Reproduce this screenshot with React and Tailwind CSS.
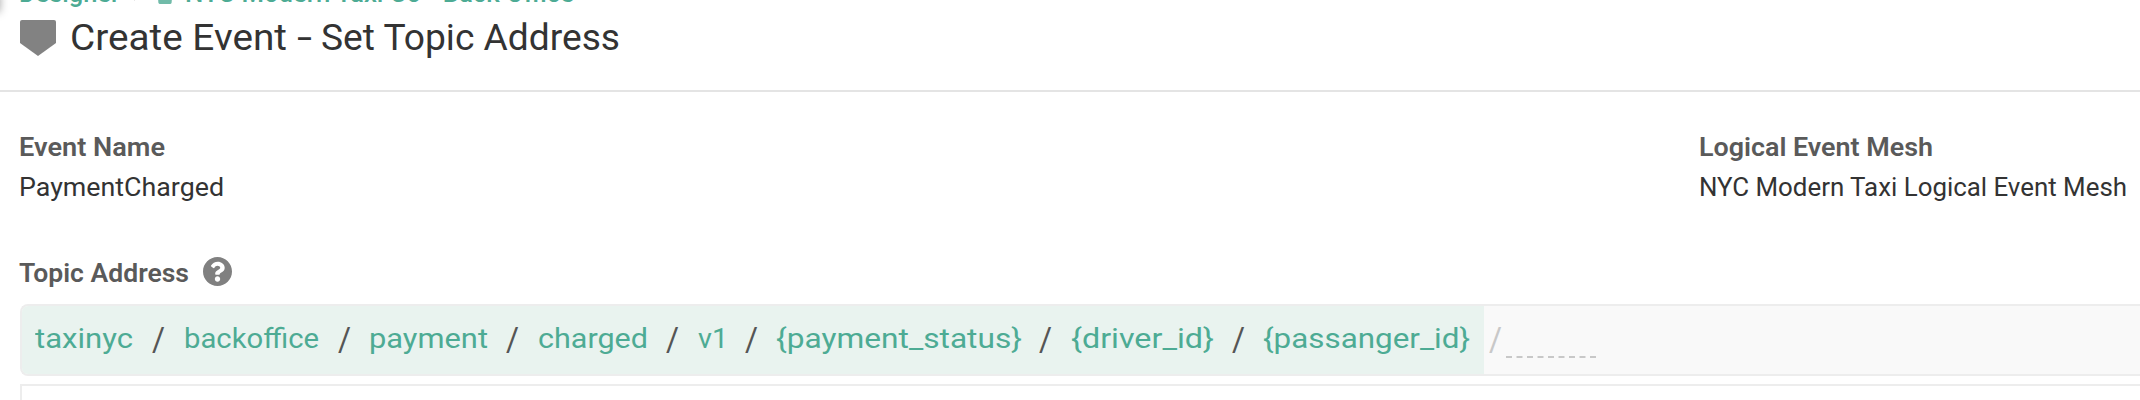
import { useLayoutEffect, useRef } from "react";
import { clsx } from "clsx";

// Stretches a single line of text so that it fills its box exactly.
function Fit({ className, children }) {
  const box = useRef(null);
  const text = useRef(null);
  useLayoutEffect(() => {
    const fit = () => {
      text.current.style.transform = "none";
      const natural = text.current.getBoundingClientRect().width;
      const wanted = box.current.getBoundingClientRect().width;
      text.current.style.transform = `scaleX(${wanted / natural})`;
    };
    fit();
    document.fonts.ready.then(fit);
  }, []);
  return (
    <span ref={box} className={clsx("block shrink-0 whitespace-nowrap", className)}>
      <span ref={text} className="inline-block origin-left">
        {children}
      </span>
    </span>
  );
}

const levels = [
  { name: "taxinyc", width: "w-[98px]", gap: "ml-[19px] mr-[19px]" },
  { name: "backoffice", width: "w-[135px]", gap: "ml-[19px] mr-[18px]" },
  { name: "payment", width: "w-[119px]", gap: "ml-[18px] mr-[19px]" },
  { name: "charged", width: "w-[110px]", gap: "ml-[18px] mr-[19px]" },
  { name: "v1", width: "w-[30px]", gap: "ml-[17px] mr-[18px]" },
  { name: "{payment_status}", width: "w-[246px]", gap: "ml-[17px] mr-[19px]" },
  { name: "{driver_id}", width: "w-[143px]", gap: "ml-[18px] mr-[18px]" },
  { name: "{passanger_id}", width: "w-[207px]", gap: "" },
];

function Slash({ className }) {
  return <Fit className={clsx("w-[13px] pt-px text-[33px]", className)}>/</Fit>;
}

function Field({ label, value, labelWidth, valueWidth }) {
  return (
    <div className="text-[26px] leading-10">
      <Fit className={clsx("font-semibold text-[#5a5a5a]", labelWidth)}>{label}</Fit>
      <Fit className={clsx("text-[#333333]", valueWidth)}>{value}</Fit>
    </div>
  );
}

export default function App() {
  return (
    <div className="flex h-[400px] w-[2140px] flex-col overflow-hidden bg-white font-['Roboto',sans-serif]">
      <header className="relative h-[92px] shrink-0 border-b-2 border-[#e4e4e4]">
        <div className="absolute -left-3 -top-2 h-5 w-3 shadow-[0_0_8px_rgba(0,0,0,0.35)]" />
        <nav className="flex h-3 items-end overflow-hidden pl-[19px] text-[25px] font-medium leading-[30px] text-[#4dab94]">
          <Fit className="mb-[3px] w-[101px]">Designer</Fit>
          <svg className="mb-2.5 ml-[13px] h-4 w-2 shrink-0" viewBox="0 0 8 16" fill="none" stroke="#a0a0a0" strokeWidth="1.5">
            <path d="M1 2l5 6-5 6" />
          </svg>
          <svg className="mb-2 ml-4 h-4 w-4 shrink-0" viewBox="0 0 16 16" fill="#71bba9">
            <path d="M0 0H16L14.6 14.5Q14.4 16 13 16H3Q1.6 16 1.4 14.5Z" />
          </svg>
          <Fit className="mb-[3px] ml-3 w-[389px]">NYC Modern Taxi Co - Back Office</Fit>
        </nav>
        <div className="flex items-start pl-5 pt-1">
          <svg className="mt-1 h-9 w-9 shrink-0" viewBox="0 0 36 36" fill="#828282">
            <path d="M2 0H34Q36 0 36 2V23L18 36L0 23V2Q0 0 2 0Z" />
          </svg>
          <h1 className="ml-[14px] flex text-[36px] leading-[44px] font-[450] text-[#333333]">
            <Fit className="w-[217px]">Create Event</Fit>
            <Fit className="ml-[10px] w-[15px]">-</Fit>
            <Fit className="ml-[9px] w-[299px]">Set Topic Address</Fit>
          </h1>
        </div>
      </header>

      <main className="flex flex-1 flex-col pt-[35px]">
        <div className="flex">
          <div className="w-[1680px] shrink-0 pl-[19px]">
            <Field label="Event Name" value="PaymentCharged" labelWidth="w-[146px]" valueWidth="w-[205px]" />
          </div>
          <div className="pl-[19px]">
            <Field
              label="Logical Event Mesh"
              value="NYC Modern Taxi Logical Event Mesh"
              labelWidth="w-[234px]"
              valueWidth="w-[428px]"
            />
          </div>
        </div>

        <div className="mt-[46px] flex h-[51px] pl-[19px] text-[26px] leading-10 text-[#5a5a5a]">
          <Fit className="w-[170px] font-semibold">Topic Address</Fit>
          <svg className="ml-[14px] mt-[4px] h-[29px] w-[29px] shrink-0" viewBox="8 8 496 496" fill="#808080">
            <path d="M504 256c0 136.997-111.043 248-248 248S8 392.997 8 256C8 119.083 119.043 8 256 8s248 111.083 248 248zM262.655 90c-54.497 0-89.255 22.957-116.549 63.758-3.536 5.286-2.353 12.415 2.715 16.258l34.699 26.31c5.205 3.947 12.621 3.008 16.665-2.122 17.864-22.658 30.113-35.797 57.303-35.797 20.429 0 45.698 13.148 45.698 32.958 0 14.976-12.363 22.667-32.534 33.976C247.128 238.528 216 254.941 216 296v4c0 6.627 5.373 12 12 12h56c6.627 0 12-5.373 12-12v-1.333c0-28.462 83.186-29.647 83.186-106.667 0-58.002-60.165-102-116.531-102zM256 338c-25.365 0-46 20.635-46 46 0 25.364 20.635 46 46 46s46-20.636 46-46c0-25.364-20.635-46-46-46z" />
          </svg>
        </div>

        <div className="ml-5 flex h-[72px] shrink-0 overflow-hidden rounded-l-lg border-2 border-r-0 border-[#ededed] bg-[#f9f9f9] text-[28.5px] leading-[66px]">
          <div className="flex w-[1462px] shrink-0 bg-[#e9f3ef] pl-[13px] font-[450] text-[#4dab94]">
            {levels.map(({ name, width, gap }) => (
              <div key={name} className="flex">
                <Fit className={width}>{name}</Fit>
                {gap && <Slash className={clsx("text-[#555555]", gap)} />}
              </div>
            ))}
          </div>
          <Slash className="ml-[5px] text-[#c8c8c8]" />
          <div className="ml-1 h-[52px] w-[90px] border-b-2 border-dashed border-[#c8c8c8]" />
        </div>

        <div className="ml-5 mt-2 flex-1 border-l-2 border-t-2 border-[#ededed]" />
      </main>
    </div>
  );
}
